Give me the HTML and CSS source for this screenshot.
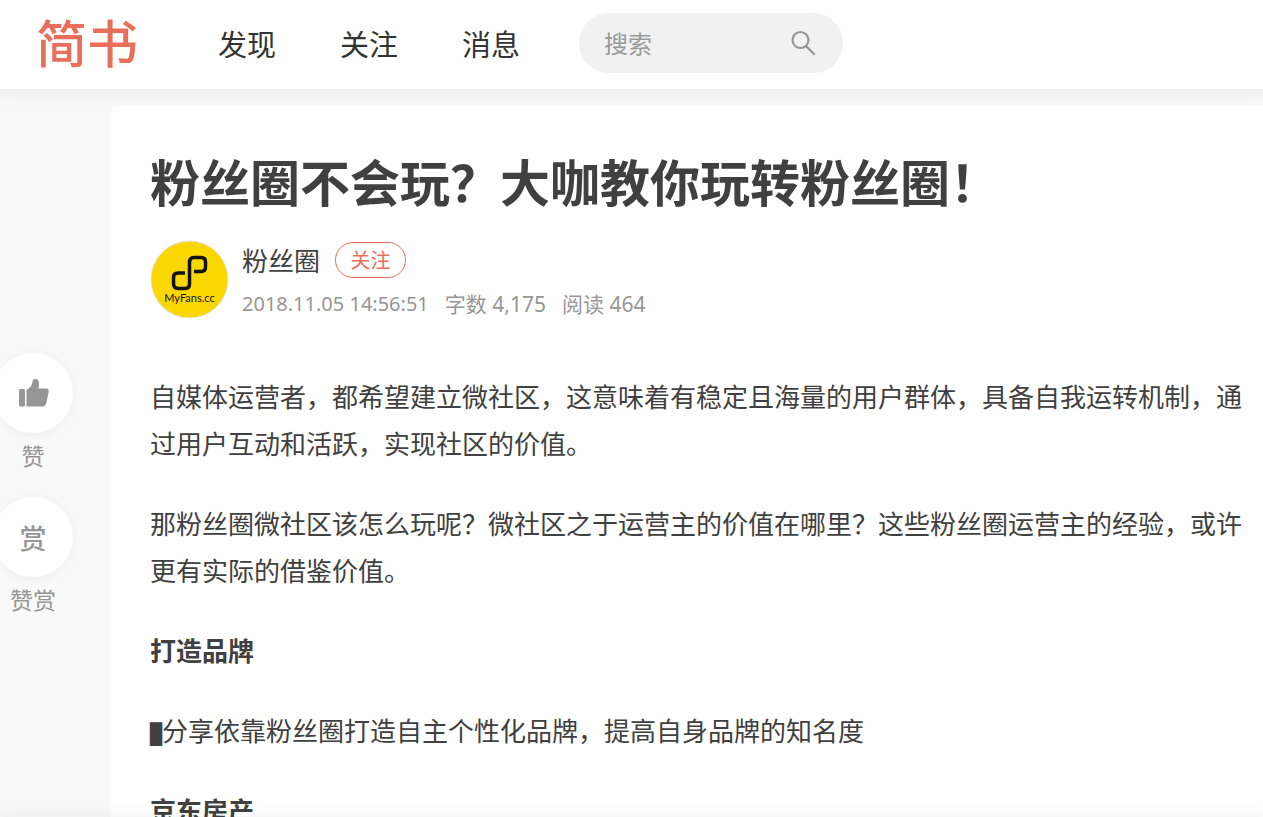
FILE: index.html
```html
<!DOCTYPE html>
<html lang="zh-CN">

<head>
    <meta charset="UTF-8">
    <meta name="viewport" content="width=device-width, initial-scale=1.0">
    <title>粉丝圈不会玩？大咖教你玩转粉丝圈！ - 简书</title>
    <link rel="stylesheet" href="styles.css">
</head>

<body>
    <header class="header">
        <a class="logo" href="#">简书</a>
        <nav class="nav">
            <a href="#">发现</a>
            <a href="#">关注</a>
            <a href="#">消息</a>
        </nav>
        <form class="search">
            <input type="text" placeholder="搜索" aria-label="搜索">
            <button type="button" aria-label="搜索">
                <svg width="26" height="26" viewBox="0 0 26 26" fill="none" stroke="#969696" stroke-width="2.2" stroke-linecap="round">
                    <circle cx="9.500" cy="10" r="8" />
                    <path d="M15.500 16.500L23 24" />
                </svg>
            </button>
        </form>
    </header>

    <div class="page">
        <aside class="tools">
            <div class="tool">
                <button type="button" class="circle" aria-labelledby="like">
                    <svg width="32" height="30" viewBox="0 0 32 30" fill="#969696">
                        <rect x="2" y="11" width="6" height="17.500" rx="1.500" />
                        <path d="M9.500 12C13 10.500 15 7.500 15.500 3.500C15.800 1.500 17 1 18.500 1C20.800 1 22 3 22 5.500C22 7.500 21.800 9 21.500 10.500H29.500C31.300 10.500 32 12 31.700 13.500L29.300 25C28.700 27.500 27.500 28.500 25.500 28.500H9.500Z" />
                    </svg>
                </button>
                <span id="like">赞</span>
            </div>
            <div class="tool">
                <button type="button" class="circle" aria-labelledby="reward">赏</button>
                <span id="reward">赞赏</span>
            </div>
        </aside>

        <article class="article">
            <h1>粉丝圈不会玩？大咖教你玩转粉丝圈！</h1>
            <div class="author">
                <a class="avatar" href="#" aria-label="粉丝圈">
                    <svg width="80" height="80" viewBox="0 0 80 80">
                        <circle cx="39.500" cy="39.500" r="38.500" fill="#fad700" stroke="#e4e4e4" />
                        <path d="M35 33H28Q23.500 33 23.500 37.500V43.500Q23.500 48.500 28.500 48.500H35Q39.500 48.500 39.500 44V22.500Q39.500 17.500 44 17.500H51Q55.500 17.500 55.500 22V27Q55.500 31.500 51 31.500H44" fill="none" stroke="#111" stroke-width="3.500" />
                        <text x="39.500" y="61.500" text-anchor="middle" class="avatar-text">MyFans.cc</text>
                    </svg>
                </a>
                <div class="info">
                    <div class="name-row">
                        <a class="name" href="#">粉丝圈</a>
                        <button type="button" class="follow">关注</button>
                    </div>
                    <div class="meta">
                        <time>2018.11.05 14:56:51</time>
                        <span>字数 4,175</span>
                        <span>阅读 464</span>
                    </div>
                </div>
            </div>

            <div class="content">
                <p>自媒体运营者，都希望建立微社区，这意味着有稳定且海量的用户群体，具备自我运转机制，通过用户互动和活跃，实现社区的价值。</p>
                <p>那粉丝圈微社区该怎么玩呢？微社区之于运营主的价值在哪里？这些粉丝圈运营主的经验，或许更有实际的借鉴价值。</p>
                <p><b>打造品牌</b></p>
                <p><span class="block">█</span>分享依靠粉丝圈打造自主个性化品牌，提高自身品牌的知名度</p>
                <p><b>京东房产</b></p>
            </div>
        </article>
    </div>
    <div class="bottom-shadow"></div>
</body>

</html>
```
FILE: styles.css
```css
body {
    margin: 0;
    background-color: #f9f9f9;
    color: #404040;
    font-family: "Noto Sans CJK SC", sans-serif;
}

a {
    color: inherit;
    text-decoration: none;
}

button,
input {
    font-family: inherit;
    border: none;
    padding: 0;
}

button {
    cursor: pointer;
}

.header {
    position: relative;
    display: flex;
    align-items: center;
    height: 89px;
    padding: 0 36px 4px;
    box-sizing: border-box;
    background-color: #fff;
    box-shadow: 0 0 16px 6px rgba(0, 0, 0, 0.05);
}

.logo {
    color: #ea6f5a;
    font-size: 51px;
    font-weight: 500;
    line-height: 64px;
    padding-bottom: 4px;
}

.nav {
    display: flex;
    gap: 64px;
    margin-left: 80px;
    font-size: 29px;
    color: #333;
}

.search {
    display: flex;
    align-items: center;
    width: 264px;
    height: 60px;
    margin: 0 0 0 59px;
    padding: 0 26px 0 25px;
    box-sizing: border-box;
    border-radius: 30px;
    background-color: #f1f1f1;
}

.search input {
    flex: 1;
    min-width: 0;
    background: none;
    font-size: 24px;
    outline: none;
}

.search input::placeholder {
    color: #999;
}

.search button {
    display: flex;
    background: none;
}

.page {
    display: flex;
}

.tools {
    display: flex;
    flex-direction: column;
    flex-shrink: 0;
    gap: 26px;
    width: 66px;
    margin-right: 45px;
    padding-top: 264px;
}

.tool {
    display: flex;
    flex-direction: column;
    align-items: center;
    gap: 6px;
    color: #969696;
    font-size: 23px;
    line-height: 32px;
}

.circle {
    display: flex;
    align-items: center;
    justify-content: center;
    width: 80px;
    height: 80px;
    border-radius: 50%;
    background-color: #fff;
    box-shadow: 0 2px 12px rgba(0, 0, 0, 0.05);
    color: #969696;
    font-size: 27px;
    font-weight: 500;
}

.article {
    flex: 1;
    position: relative;
    margin-top: 17px;
    padding: 40px 0 0 39px;
    border-radius: 8px 0 0 0;
    background-color: #fff;
}

h1 {
    margin: 0 0 24px;
    font-size: 50px;
    line-height: 68px;
}

.author {
    display: flex;
    align-items: flex-start;
    gap: 12px;
    margin-top: 26px;
    margin-bottom: 52px;
}

.avatar {
    display: flex;
}

.avatar-text {
    font-family: Lato, sans-serif;
    font-size: 11px;
    fill: #111;
}

.info {
    padding-top: 2px;
}

.name-row {
    display: flex;
    align-items: center;
    gap: 15px;
    margin-bottom: 10px;
}

.name {
    font-size: 26px;
    line-height: 36px;
}

.follow {
    width: 71px;
    height: 36px;
    border: 1px solid #ea6f5a;
    border-radius: 18px;
    background-color: #fff;
    color: #ea6f5a;
    font-size: 20px;
    line-height: 32px;
}

.meta {
    display: flex;
    gap: 16px;
    color: #969696;
    font-family: "Noto Sans", "Noto Sans CJK SC", sans-serif;
    font-size: 21px;
    line-height: 32px;
}

.meta time {
    font-size: 20px;
}

.content {
    font-size: 26px;
    line-height: 47px;
}

.content p {
    margin: 0 0 33px;
}

.block {
    font-family: "DejaVu Sans Mono", monospace;
    font-size: 20px;
    line-height: 1;
}

.bottom-shadow {
    position: fixed;
    left: 0;
    right: 0;
    bottom: 0;
    box-shadow: 0 0 12px 2px rgba(0, 0, 0, 0.1);
}
```
